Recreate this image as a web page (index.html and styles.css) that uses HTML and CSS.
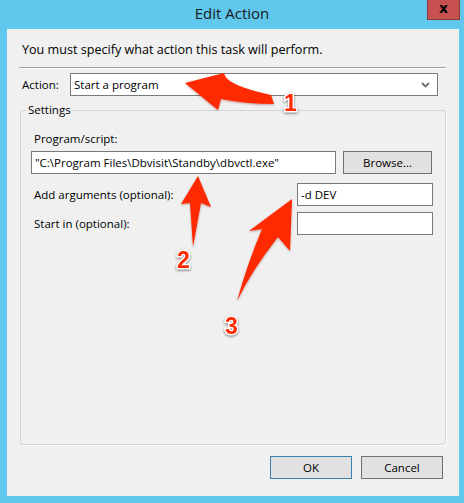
FILE: index.html
```html
<!DOCTYPE html>
<html lang="en">

<head>
    <meta charset="UTF-8">
    <meta name="viewport" content="width=device-width, initial-scale=1.0">
    <title>Edit Action</title>
    <link rel="stylesheet" href="styles.css">
</head>

<body>
    <div class="window">
        <div class="titlebar">
            <span class="title">Edit Action</span>
            <button class="closeBtn">x</button>
        </div>
        <div class="client">
            <p class="intro">You must specify what action this task will perform.</p>
            <div class="separator"></div>
            <div class="actionRow">
                <label for="action">Action:</label>
                <div class="select" id="action">
                    <span>Start a program</span>
                    <svg width="9" height="6" viewBox="0 0 9 6">
                        <path d="M1 1 L4.5 4.5 L8 1" fill="none" stroke="#6d6d6d" stroke-width="1.8" />
                    </svg>
                </div>
            </div>
            <fieldset class="settings">
                <legend>Settings</legend>
                <label for="program" class="fieldLabel">Program/script:</label>
                <div class="programRow">
                    <input class="field" id="program" type="text" value='"C:\Program Files\Dbvisit\Standby\dbvctl.exe"'>
                    <button class="winButton browse">Browse...</button>
                </div>
                <div class="optRow">
                    <label for="args">Add arguments (optional):</label>
                    <input class="field small" id="args" type="text" value="-d DEV">
                </div>
                <div class="optRow startRow">
                    <label for="startin">Start in (optional):</label>
                    <input class="field small" id="startin" type="text">
                </div>
            </fieldset>
            <div class="buttons">
                <button class="winButton ok">OK</button>
                <button class="winButton">Cancel</button>
            </div>
        </div>

        <!-- annotation arrows drawn over the dialog -->
        <svg class="marks" width="464" height="503" viewBox="0 0 464 503">
            <g class="arrow">
                <path d="M185 83 L224 73 Q225 85 271 95 L274 104 Q245 104 221 99 L218 110 Z" />
                <path d="M198 176 L211 207 L201 203 L193 247 L190 203 L181 204 Z" />
                <path d="M292 199 L290 251 L278 237 Q252 270 237 301 Q248 262 262 229 L249 231 Z" />
            </g>
            <g class="num">
                <text x="284" y="111">1</text>
                <text x="177" y="268">2</text>
                <text x="225" y="334">3</text>
            </g>
        </svg>
    </div>
</body>

</html>
```

FILE: styles.css
```css
body {
    margin: 0;
    background: #60c8ec;
    font-family: "Open Sans", "Noto Sans", sans-serif;
    font-size: 11.5px;
    color: #000;
}

.window {
    position: relative;
    width: 464px;
    height: 503px;
    display: flex;
    flex-direction: column;
    background: #60c8ec;
}

.titlebar {
    height: 29px;
    display: grid;
    grid-template-columns: 1fr auto 1fr;
    align-items: start;
}

.title {
    grid-column: 2;
    font-size: 15px;
    line-height: 27px;
    color: #1a1a1a;
}

.closeBtn {
    grid-column: 3;
    justify-self: end;
    width: 33px;
    height: 20px;
    margin-right: 4px;
    padding: 0 0 3px;
    border: 1px solid #8c3a34;
    border-top: none;
    background: #c75050;
    font-family: "DejaVu Sans", sans-serif;
    font-weight: bold;
    font-size: 14px;
    line-height: 14px;
    color: #000;
}

.client {
    flex: 1;
    margin: 0 5px 7px 7px;
    padding: 13px 13px 17px;
    background: #f0f0f0;
    display: flex;
    flex-direction: column;
}

.intro {
    margin: 0 0 0 2px;
    font-size: 12.6px;
    line-height: 16px;
}

.separator {
    margin: 9px 0 0 -1px;
    border-top: 1px solid #a0a0a0;
    border-bottom: 1px solid #fff;
}

.actionRow {
    display: flex;
    align-items: center;
    margin-top: 4px;
    padding-left: 2px;
}

.actionRow label {
    width: 48px;
}

.select {
    flex: 1;
    height: 23px;
    box-sizing: border-box;
    margin-right: 8px;
    border: 1px solid #7a7a7a;
    background: #fff;
    display: flex;
    align-items: center;
    justify-content: space-between;
    padding: 0 7px 0 3px;
}

.settings {
    flex: 1;
    margin: 6px 0 0;
    padding: 13px 12px 0 10px;
    border: 1px solid #d5d5d5;
    border-radius: 3px;
    box-shadow: 1px 1px 0 #fff;
}

.settings legend {
    margin-left: -5px;
    padding: 0 2px;
    line-height: 16px;
}

.fieldLabel {
    display: block;
    padding-left: 3px;
    line-height: 16px;
}

.programRow {
    display: flex;
    gap: 7px;
    margin-top: 4px;
}

.field {
    box-sizing: border-box;
    height: 23px;
    border: 1px solid #7a7a7a;
    background: #fff;
    padding: 0 3px;
    font: inherit;
    color: #000;
    outline: none;
}

.programRow .field {
    flex: 1;
}

.optRow {
    display: flex;
    align-items: center;
    justify-content: space-between;
    margin-top: 9px;
    padding-left: 3px;
}

.startRow {
    margin-top: 6px;
}

.field.small {
    width: 136px;
}

.winButton {
    box-sizing: border-box;
    height: 23px;
    border: 1px solid #707070;
    background: #e1e1e1;
    font: inherit;
    color: #000;
    padding: 0;
}

.browse {
    width: 89px;
    margin-right: 1px;
}

.buttons {
    display: flex;
    justify-content: flex-end;
    gap: 9px;
    margin-top: 11px;
    padding-right: 3px;
}

.buttons .winButton {
    width: 82px;
}

.winButton.ok {
    border-color: #3c7fb1;
}

.marks {
    position: absolute;
    left: 0;
    top: 0;
    pointer-events: none;
}

.arrow path {
    fill: #ff2a00;
    filter: drop-shadow(0 1px 1px rgba(120, 0, 0, .35));
}

.num text {
    font-family: "Liberation Sans", Arial, sans-serif;
    font-weight: bold;
    font-size: 23px;
    fill: #ff2a00;
    stroke: #fff;
    stroke-width: 3px;
    paint-order: stroke;
    filter: drop-shadow(0 1px 1px rgba(0, 0, 0, .5));
}
```
